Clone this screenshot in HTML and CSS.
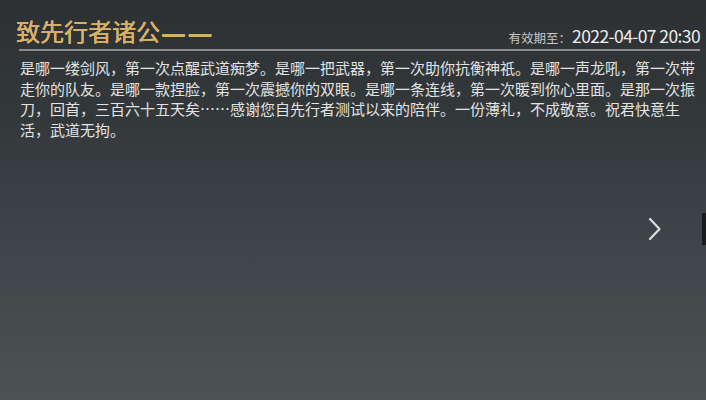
FILE: index.html
```html
<!DOCTYPE html>
<html lang="zh-CN">
<head>
<meta charset="utf-8">
<link rel="stylesheet" href="styles.css">
</head>
<body>
<div class="screen">
  <div class="panel">
    <div class="header">
      <h1 class="title">致先行者诸公<span class="dash">——</span></h1>
      <div class="expiry"><span class="expiry-label">有效期至：</span><span class="expiry-date">2022-04-07 20:30</span></div>
    </div>
    <p class="letter">是哪一缕剑风，第一次点醒武道痴梦。是哪一把武器，第一次助你抗衡神祇。是哪一声龙吼，第一次带走你的队友。是哪一款捏脸，第一次震撼你的双眼。是哪一条连线，第一次暖到你心里面。是那一次振刀，回首，三百六十五天矣……感谢您自先行者测试以来的陪伴。一份薄礼，不成敬意。祝君快意生活，武道无拘。</p>
  </div>
  <div class="next">
    <svg width="14" height="24" viewBox="0 0 14 24"><polyline points="2,2 11.5,12 2,22" fill="none" stroke="#dcdede" stroke-width="2.2" stroke-linecap="round" stroke-linejoin="round"/></svg>
  </div>
  <div class="edge"></div>
</div>
</body>
</html>
```

FILE: styles.css
```css
html, body {
  margin: 0;
  padding: 0;
}
body {
  width: 706px;
  height: 400px;
  overflow: hidden;
  font-family: "Noto Sans CJK SC", "Noto Sans", sans-serif;
}
.screen {
  position: relative;
  width: 706px;
  height: 400px;
  background: linear-gradient(180deg, #2d3134 0%, #33383b 30%, #3e4548 60%, #4b5355 100%);
}
.panel {
  padding: 0 6px 0 19px;
}
.header {
  height: 51px;
  display: flex;
  justify-content: space-between;
  align-items: flex-end;
  border-bottom: 2px solid #8a8d8f;
  box-sizing: border-box;
  padding-bottom: 3px;
}
.title {
  margin: 0 0 0 -3px;
  font-size: 24px;
  line-height: 26px;
  font-weight: 400;
  color: #d8b168;
  text-shadow: 0 0 0.4px #d8b168, 0.3px 0 0 #d8b168;
}
.dash {
  font-family: "DejaVu Sans", sans-serif;
  font-weight: 400;
  font-size: 25px;
  letter-spacing: 1.5px;
  margin-left: 1px;
  position: relative;
  top: 1px;
  text-shadow: 0 0.5px 0 #d8b168, 0 -0.3px 0 #d8b168;
}
.expiry {
  display: flex;
  align-items: baseline;
  line-height: 22px;
  margin-bottom: -3px;
}
.expiry-label {
  font-size: 12.5px;
  color: #c4c6c7;
  margin-right: 1px;
}
.expiry-date {
  font-size: 17.5px;
  color: #eeeeee;
  letter-spacing: -0.6px;
}
.letter {
  margin: 7px 0 0 1px;
  width: 676px;
  font-size: 15px;
  line-height: 20.7px;
  color: #e2e3e3;
}
.next {
  position: absolute;
  left: 648px;
  top: 217px;
  width: 14px;
  height: 24px;
}
.next svg {
  display: block;
}
.edge {
  position: absolute;
  right: 0;
  top: 213px;
  width: 4px;
  height: 32px;
  background: #1a1c1e;
}
```
